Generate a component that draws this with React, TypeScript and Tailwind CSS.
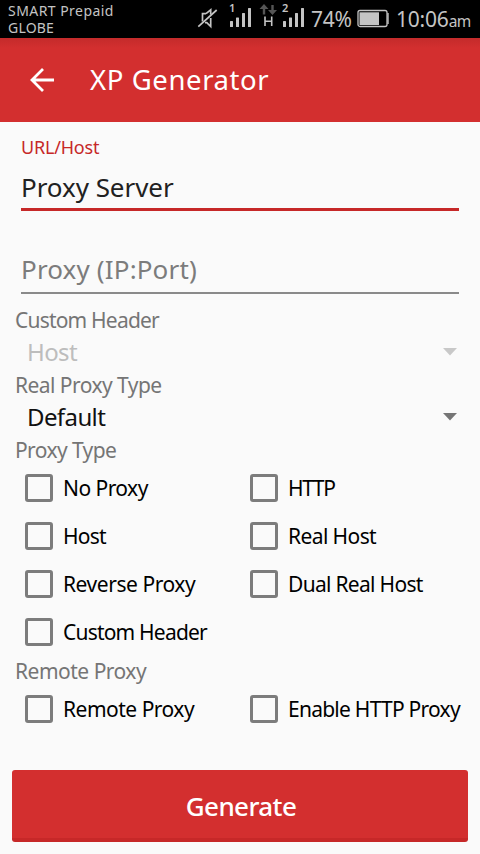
import clsx from "clsx";

const proxyTypes = [
  { label: "No Proxy", tracking: "tracking-[-0.55px]" },
  { label: "HTTP", tracking: "tracking-[-1.4px]" },
  { label: "Host", tracking: "tracking-[-0.8px]" },
  { label: "Real Host", tracking: "tracking-[-0.6px]" },
  { label: "Reverse Proxy", tracking: "tracking-[-0.45px]" },
  { label: "Dual Real Host", tracking: "tracking-[-0.7px]" },
  { label: "Custom Header", tracking: "tracking-[-0.8px]" },
];

const remoteTypes = [
  { label: "Remote Proxy", tracking: "tracking-[-0.5px]" },
  { label: "Enable HTTP Proxy", tracking: "tracking-[-0.75px]" },
];

export default function App() {
  return (
    <div className="flex h-[854px] w-[480px] flex-col overflow-hidden bg-[#fafafa] font-['Noto_Sans',sans-serif] whitespace-nowrap">
      <StatusBar />
      <AppBar />

      <main className="flex flex-1 flex-col">
        {/* Text fields */}
        <section className="mx-[21px]">
          <div className="flex h-[89px] flex-col border-b-3 border-[#c62828]">
            <label className="mt-[11px] h-[28px] text-[18px] leading-[28px] tracking-[-0.2px] text-[#c62828]">
              URL/Host
            </label>
            <div className="mt-[8px] text-[26px] leading-[36px] tracking-[-0.05px] text-[#212121]">
              Proxy Server
            </div>
          </div>
          <div className="flex h-[83px] flex-col justify-end border-b-2 border-[#8a8a8a]">
            <div className="mb-[5px] text-[26px] leading-[36px] tracking-[0.15px] text-[#7c7c7c]">
              Proxy (IP:Port)
            </div>
          </div>
        </section>

        <SectionLabel className="mt-[12px] tracking-[-0.8px]">Custom Header</SectionLabel>
        <Spinner value="Host" disabled />
        <SectionLabel className="tracking-[-0.55px]">Real Proxy Type</SectionLabel>
        <Spinner value="Default" />
        <SectionLabel className="tracking-[-0.6px]">Proxy Type</SectionLabel>
        <CheckGrid items={proxyTypes} className="-mt-px" />
        <SectionLabel className="mt-px tracking-[-0.5px]">Remote Proxy</SectionLabel>
        <CheckGrid items={remoteTypes} className="-mt-px" />

        <button className="mx-3 mt-auto mb-3 h-[72px] rounded-[3px] border-b-4 border-[#c62828] bg-[#d32f2f] pt-1 pl-[2px] text-[26px] leading-[36px] font-medium tracking-[-0.6px] text-white">
          Generate
        </button>
      </main>
    </div>
  );
}

function StatusBar() {
  return (
    <div className="flex h-[38px] items-start bg-black text-[#c4c4c4]">
      <div className="ml-2 w-[188px] pt-[2px] text-[14px]">
        <div className="h-[17px] leading-[17px] tracking-[0.45px]">SMART Prepaid</div>
        <div className="h-[17px] leading-[17px] tracking-[0.2px]">GLOBE</div>
      </div>
      <svg className="shrink-0" width="22" height="38" viewBox="0 0 22 38" fill="none" stroke="currentColor" strokeWidth="1.7">
        <path d="M10 13.7 H6.5 V21.5 M10 13.7 L14.7 9.8 V14.5 M9 22.7 H10.8 L14.7 26.5 V18" />
        <path d="M2.3 26.7 L20.7 10" />
      </svg>
      <SignalIcon sim="1" className="ml-[11px]" />
      <svg className="ml-[6px] shrink-0" width="20" height="38" viewBox="0 0 20 38">
        <path d="M5 4 L9.5 9 H6.2 V14.5 H3.8 V9 H0.5 Z M13.5 15 L9 10 H12.3 V5 H14.7 V10 H18 Z" fill="#555" />
        <path d="M6 16.5 V26 M12.7 16.5 V26 M6 21.2 H12.7" fill="none" stroke="currentColor" strokeWidth="1.6" />
      </svg>
      <SignalIcon sim="2" className="ml-[3px]" />
      <span className="ml-[5px] w-[41px] pt-[5px] text-[21px] leading-[29px] tracking-[-0.3px]">74%</span>
      <svg className="ml-[5px] shrink-0" width="33" height="38" viewBox="0 0 33 38">
        <rect x="1" y="10.5" width="29" height="16" rx="2" fill="none" stroke="currentColor" strokeWidth="1.3" />
        <path d="M31 13 V24" stroke="currentColor" strokeWidth="1.4" />
        <rect x="2.5" y="12.3" width="19.5" height="12.7" fill="currentColor" />
      </svg>
      <span className="ml-[6px] pt-[5px] text-[21px] leading-[29px] tracking-[-0.2px]">
        10:06<span className="text-[15.5px] tracking-[-0.6px]">am</span>
      </span>
    </div>
  );
}

function SignalIcon({ sim, className }: { sim: string; className?: string }) {
  return (
    <svg className={clsx("shrink-0", className)} width="24" height="38" viewBox="0 0 24 38" fill="currentColor">
      <text x="0" y="12" fontSize="11" fontFamily="Noto Sans" fontWeight="600">
        {sim}
      </text>
      <rect x="1" y="21" width="3" height="6" rx="0.5" />
      <rect x="7" y="17.5" width="3" height="9.5" rx="0.5" />
      <rect x="13" y="13" width="3" height="14" rx="0.5" />
      <rect x="19" y="8" width="3" height="19" rx="0.5" />
    </svg>
  );
}

function AppBar() {
  return (
    <header className="flex h-[84px] items-center bg-[#d32f2f] bg-linear-to-b from-[#c42b2b] to-[#d32f2f] to-12% text-white">
      <svg className="ml-[30px]" width="24" height="24" viewBox="0 0 24 24" fill="none" stroke="currentColor" strokeWidth="2.8">
        <path d="M24 12 H2 M13 1 L2 12 L13 23" />
      </svg>
      <h1 className="ml-[36px] text-[27.5px] leading-[38px] tracking-[0.6px]">XP Generator</h1>
    </header>
  );
}

function SectionLabel({ children, className }: { children: string; className?: string }) {
  return (
    <div className={clsx("ml-[15px] h-[29px] text-[21px] leading-[29px] text-[#757575]", className)}>
      {children}
    </div>
  );
}

function Spinner({ value, disabled = false }: { value: string; disabled?: boolean }) {
  return (
    <div
      className={clsx(
        "flex h-[36px] items-center justify-between pr-[23px] pb-[2px] pl-[27px] text-[24px] leading-[34px] tracking-[-0.6px]",
        disabled ? "text-[#bdbdbd]" : "text-[#111]",
      )}
    >
      {value}
      <svg width="14" height="8" viewBox="0 0 14 8" fill={disabled ? "#c8c8c8" : "#757575"}>
        <path d="M0 0 H14 L7 7.5 Z" />
      </svg>
    </div>
  );
}

function CheckGrid({ items, className }: { items: { label: string; tracking: string }[]; className?: string }) {
  return (
    <div className={clsx("ml-[25px] grid grid-cols-[225px_1fr]", className)}>
      {items.map((item) => (
        <label key={item.label} className="flex h-12 items-center">
          <span className="size-[28px] rounded-[3px] border-3 border-[#7c7c7c]" />
          <span className={clsx("ml-[10px] text-[21px] leading-[29px] text-black", item.tracking)}>{item.label}</span>
        </label>
      ))}
    </div>
  );
}
